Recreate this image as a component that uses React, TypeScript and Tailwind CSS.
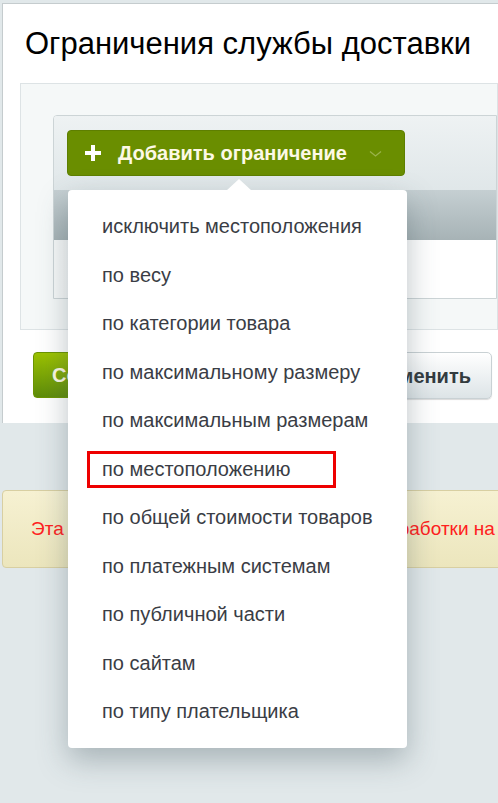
const items = [
  "исключить местоположения",
  "по весу",
  "по категории товара",
  "по максимальному размеру",
  "по максимальным размерам",
  "по местоположению",
  "по общей стоимости товаров",
  "по платежным системам",
  "по публичной части",
  "по сайтам",
  "по типу плательщика",
];

export default function App() {
  return (
    <div
      className="relative flex h-[803px] w-[498px] flex-col overflow-hidden bg-[#e1e8ea]"
      style={{ fontFamily: "'Liberation Sans', Arial, sans-serif" }}
    >
      {/* main white panel */}
      <div className="ml-[2px] mt-[3px] flex h-[420px] flex-col border-l border-t border-[#c5ccce] bg-white">
        <h1 className="pl-[22px] pt-[21px] text-[31px] leading-[38px] text-black">
          Ограничения службы доставки
        </h1>

        <div className="ml-[17px] mt-[20px] flex h-[247px] flex-col border border-[#dde3e5] bg-[#f5f8f8] pl-[32px] pt-[31px]">
          <div className="flex h-[184px] flex-col overflow-hidden rounded-tl-[4px] border border-[#ccd4d6] bg-white">
            <div className="flex h-[74px] items-start bg-gradient-to-b from-[#eef2f3] to-[#e0e7e9] pl-[13px] pt-[14px]">
              <div className="flex h-[46px] w-[338px] items-center rounded-[4px] border border-[#5e7f00] bg-[#6a8e00] pl-[17px]">
                <span className="relative block h-[16px] w-[16px]">
                  <span className="absolute left-0 top-[6px] h-[4px] w-[16px] bg-white" />
                  <span className="absolute left-[6px] top-0 h-[16px] w-[4px] bg-white" />
                </span>
                <span className="ml-[17px] text-[20px] font-bold text-[#fdf9e6]">Добавить ограничение</span>
                <svg className="ml-[22px] mt-[2px]" width="13" height="8" viewBox="0 0 13 8">
                  <path d="M1 1.5 L6.5 6 L12 1.5" fill="none" stroke="#9ab34a" strokeWidth="1.3" />
                </svg>
              </div>
            </div>
            <div className="h-[50px] bg-gradient-to-b from-[#c5cfd2] to-[#a7b3b6]" />
            <div className="h-[58px] bg-gradient-to-r from-[#f7f9f9] via-white to-white" />
          </div>
        </div>

        <div className="mt-[22px] flex items-start justify-between pl-[30px] pr-[6px]">
          <button className="h-[46px] w-[140px] rounded-[4px] border border-[#6b9400] bg-gradient-to-b from-[#9cc200] to-[#5e8c0a] pl-[18px] text-left text-[20px] font-bold text-[#fdf9e6]">
            Сохранить
          </button>
          <button className="h-[47px] w-[150px] rounded-[5px] border border-[#c9d1d4] bg-gradient-to-b from-white to-[#dde4e7] pr-[20px] text-right text-[20px] font-bold text-[#333b3f] shadow-[0_1px_1px_rgba(0,0,0,0.15)]">
            Применить
          </button>
        </div>
      </div>

      {/* notice */}
      <div className="ml-[2px] mt-[67px] flex h-[78px] w-[540px] items-center overflow-hidden whitespace-nowrap rounded-[4px] border border-[#d8cfa2] bg-gradient-to-b from-[#f6f1d2] to-[#ece6bd] pl-[28px] text-[19px] text-[#ff2020]">
        Эта функция ещё находится в стадии разработки на сайте
      </div>

      {/* dropdown */}
      <div className="absolute left-[68px] top-[190px] flex w-[339px] flex-col rounded-[4px] bg-white py-[12px] shadow-[0_12px_30px_rgba(60,80,90,0.35)]">
        <div className="absolute -top-[11px] left-[158px] h-0 w-0 border-b-[12px] border-l-[13px] border-r-[13px] border-b-white border-l-transparent border-r-transparent" />
        {items.map((label, i) => (
          <div key={label} className="relative flex h-[48.5px] items-center pl-[34px] text-[20px] text-[#3a3d45]">
            {i === 5 ? (
              <span className="absolute left-[19px] top-[6px] h-[37px] w-[249px] border-[3px] border-[#ee0000]" />
            ) : null}
            <span className="relative">{label}</span>
          </div>
        ))}
      </div>
    </div>
  );
}
